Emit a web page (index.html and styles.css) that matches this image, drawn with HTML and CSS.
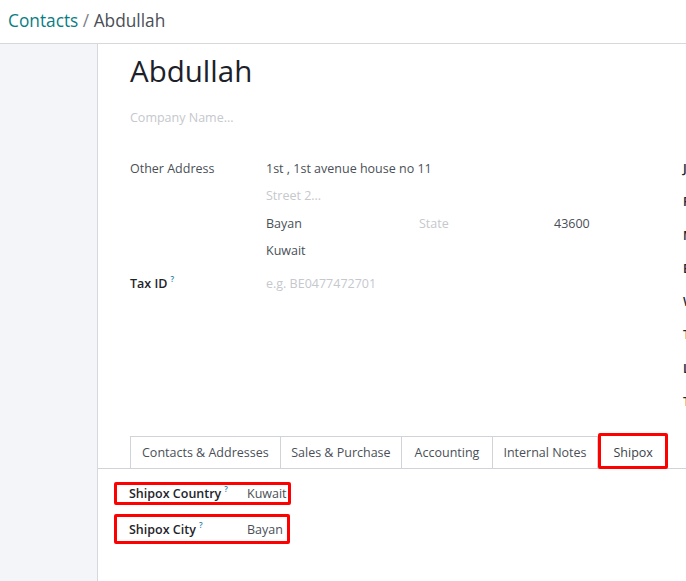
FILE: index.html
```html
<!DOCTYPE html>
<html>
<head>
<meta charset="utf-8">
<link rel="stylesheet" href="styles.css">
</head>
<body>
<header class="topbar">
  <span class="crumb-link">Contacts</span><span class="crumb-sep"> / </span><span class="crumb-cur">Abdullah</span>
</header>
<div class="layout">
  <aside class="side"></aside>
  <main class="sheet">
    <div class="sheet-top">
      <h1 class="name">Abdullah</h1>
      <div class="company ph">Company Name...</div>
      <div class="groups">
        <div class="group-left">
          <div class="field">
            <div class="label">Other Address</div>
            <div class="address">
              <div class="line">1st , 1st avenue house no 11</div>
              <div class="line ph">Street 2...</div>
              <div class="line tri"><span class="city">Bayan</span><span class="state ph">State</span><span class="zip">43600</span></div>
              <div class="line">Kuwait</div>
            </div>
          </div>
          <div class="field tax">
            <div class="label strong">Tax ID<sup>?</sup></div>
            <div class="value ph">e.g. BE0477472701</div>
          </div>
        </div>
        <div class="group-right">
          <div class="rlabel">Job Position</div>
          <div class="rlabel">Phone</div>
          <div class="rlabel">Mobile</div>
          <div class="rlabel">Email</div>
          <div class="rlabel">Website</div>
          <div class="rlabel">Title</div>
          <div class="rlabel">Language</div>
          <div class="rlabel">Tags</div>
        </div>
      </div>
    </div>
    <nav class="tabs">
      <div class="tab">Contacts &amp; Addresses</div>
      <div class="tab">Sales &amp; Purchase</div>
      <div class="tab tab-wide">Accounting</div>
      <div class="tab">Internal Notes</div>
      <div class="tab active">Shipox</div>
    </nav>
    <section class="tab-pane">
      <div class="hl-row row-country">
        <div class="hl-label">Shipox Country<sup>?</sup></div>
        <div class="hl-value">Kuwait</div>
      </div>
      <div class="hl-row row-city">
        <div class="hl-label">Shipox City<sup>?</sup></div>
        <div class="hl-value">Bayan</div>
      </div>
    </section>
  </main>
</div>
</body>
</html>
```
FILE: styles.css
```css
* { box-sizing: border-box; }
html, body { margin: 0; padding: 0; }
body {
  width: 686px;
  height: 581px;
  overflow: hidden;
  font-family: "Open Sans", "Noto Sans", sans-serif;
  font-size: 12.5px;
  color: #4a4f57;
  background: #fff;
}
.topbar {
  height: 44px;
  border-bottom: 1px solid #d6d8dc;
  padding: 9px 0 0 8px;
  font-size: 17.3px;
  line-height: 24px;
}
.crumb-link { color: #0a7d83; }
.crumb-sep { color: #7a7f87; }
.crumb-cur { color: #4a4f57; }

.layout {
  display: flex;
  height: 537px;
}
.side {
  width: 98px;
  flex: none;
  background: #f4f5f9;
  border-right: 1px solid #d6d8dc;
}
.sheet {
  flex: 1;
  min-width: 0;
  overflow: hidden;
}
.sheet-top {
  padding-left: 32px;
}
.name {
  margin: 0;
  padding-top: 7px;
  font-size: 29.5px;
  font-weight: 400;
  line-height: 40px;
  color: #1c2129;
}
.ph { color: #c5c8cd; }
.company {
  margin-top: 18px;
  line-height: 18px;
}
.groups {
  display: flex;
  margin-top: 33px;
  height: 276px;
}
.group-left { width: 553px; flex: none; }
.field { display: flex; }
.label { width: 136px; flex: none; line-height: 18px; color: #4a4f57; }
.label.strong { color: #1f242b; font-weight: 600; }
sup { font-size: 8px; color: #2d7ea3; margin-left: 3px; vertical-align: 6px; line-height: 0; font-weight: 600; }
.address .line { line-height: 18px; height: 27.3px; }
.tri { display: flex; }
.city { width: 153px; }
.state { width: 135px; }
.tax { margin-top: 6px; }
.tax .value { line-height: 18px; }
.group-right {
  white-space: nowrap;
}
.rlabel {
  height: 33.3px;
  line-height: 18px;
  color: #1f242b;
  font-weight: 600;
}

.tabs {
  display: flex;
  padding-left: 32px;
  border-bottom: 1px solid #d0d3d8;
  height: 33px;
}
.tab {
  border: 1px solid #d0d3d8;
  border-bottom: none;
  border-left: none;
  padding: 0 10.5px;
  line-height: 31px;
  color: #4a4f57;
  white-space: nowrap;
}
.tab:first-child { border-left: 1px solid #d0d3d8; padding: 0 11px; }
.tab.tab-wide { padding: 0 12.5px; }
.tab.active {
  position: relative;
  top: -3px;
  height: 36px;
  border: 3px solid #ff0000;
  border-radius: 2px;
  line-height: 33px;
  padding: 0 12.5px;
  color: #3a3f47;
  background: #fff;
}

.tab-pane {
  padding: 13px 0 0 16px;
}
.hl-row {
  display: flex;
  align-items: center;
  border: 3px solid #ff0000;
  border-radius: 2px;
  padding-left: 12px;
}
.row-country { width: 177px; height: 23px; }
.row-city { width: 176px; height: 30px; margin-top: 9px; }
.hl-label {
  width: 118px;
  flex: none;
  color: #1f242b;
  font-weight: 600;
  white-space: nowrap;
}
.hl-value { color: #4a4f57; white-space: nowrap; }
```
